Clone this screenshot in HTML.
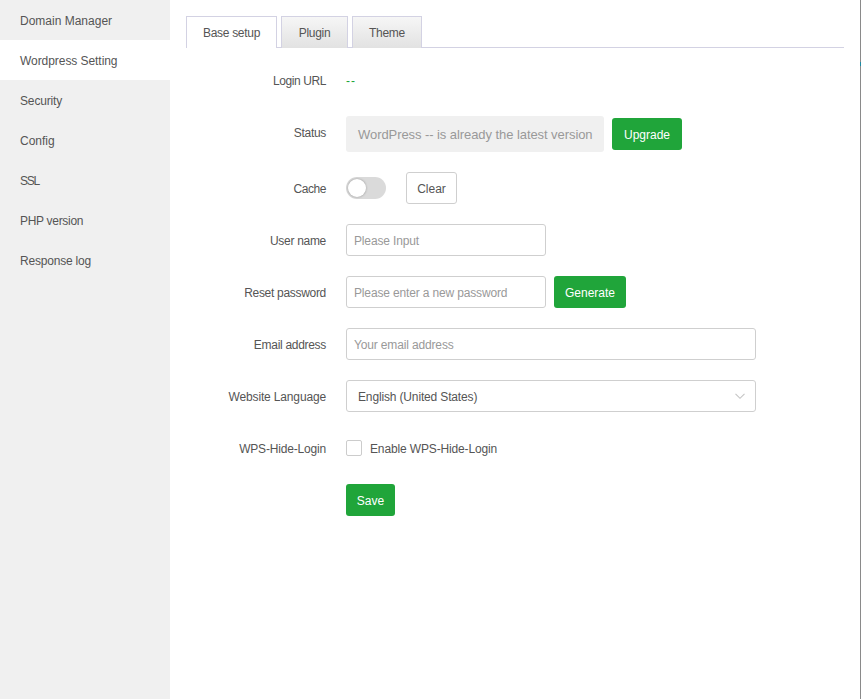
<!DOCTYPE html>
<html><head><meta charset="utf-8">
<style>
*{box-sizing:border-box;margin:0;padding:0}
html,body{width:861px;height:699px;overflow:hidden;background:#fff}
body{font-family:"Liberation Sans",sans-serif;font-size:12px;color:#666;position:relative}
.side{position:absolute;left:0;top:0;width:170px;height:699px;background:#f0f0f0}
.side div{height:40px;line-height:40px;padding-top:1px;padding-left:20px;color:#555;font-size:12px}
.side div.on{background:#fff}
.rb{position:absolute;left:860px;top:0;width:1px;height:699px;background:#8a8a8a}
.tabs{position:absolute;left:186px;top:16px;width:658px;height:32px;border-bottom:1px solid #d3d2e3}
.tab{position:absolute;top:0;height:32px;border:1px solid #d3d2e3;border-bottom:none;text-align:center;line-height:31px;padding-top:1px;color:#555;letter-spacing:-0.3px;background:linear-gradient(#f6f6f6,#e2e2e2)}
.tab.on{background:#fff;height:32px}
.abs{position:absolute}
.lbl{position:absolute;right:535px;color:#555;font-size:12px;white-space:nowrap;letter-spacing:-0.3px}
.btn{position:absolute;background:#20a53a;color:#fff;border-radius:3px;text-align:center;font-size:12px;padding-top:1px}
.inp{position:absolute;border:1px solid #cfcfcf;border-radius:3px;background:#fff;color:#999;padding-left:7px;padding-top:1px;font-size:12px;letter-spacing:-0.15px;white-space:nowrap}
</style></head><body>
<div class="side">
<div>Domain Manager</div>
<div class="on" style="letter-spacing:-0.06px">Wordpress Setting</div>
<div style="letter-spacing:-0.15px">Security</div>
<div>Config</div>
<div style="letter-spacing:-1.3px">SSL</div>
<div style="letter-spacing:-0.3px">PHP version</div>
<div style="letter-spacing:-0.2px">Response log</div>
</div>
<div class="rb"></div><div class="abs" style="left:860px;top:62px;width:1px;height:4px;background:#1d8ba3"></div>

<div class="tabs">
<div class="tab on" style="left:0;width:91px">Base setup</div>
<div class="tab" style="left:95px;width:67px">Plugin</div>
<div class="tab" style="left:166px;width:70px">Theme</div>
</div>

<div class="lbl" style="top:74px;letter-spacing:-0.4px">Login URL</div>
<div class="abs" style="left:346px;top:74px;color:#20a53a;letter-spacing:1px">--</div>

<div class="lbl" style="top:126px">Status</div>
<div class="abs" style="left:346px;top:116px;width:258px;height:36px;background:#f0f0f0;border-radius:3px;color:#999;font-size:13px;line-height:36px;padding-top:1px;padding-left:12px;letter-spacing:-0.07px;white-space:nowrap">WordPress -- is already the latest version</div>
<div class="btn" style="left:612px;top:118px;width:70px;height:32px;line-height:32px">Upgrade</div>

<div class="lbl" style="top:182px;letter-spacing:-0.45px">Cache</div>
<div class="abs" style="left:346px;top:177px;width:40px;height:22px;border-radius:11px;background:#dadada"></div>
<div class="abs" style="left:348px;top:179px;width:18px;height:18px;border-radius:50%;background:#fff;box-shadow:0 0 2px 0.5px rgba(0,0,0,.2)"></div>
<div class="abs" style="left:406px;top:172px;width:51px;height:32px;border:1px solid #cfcfcf;border-radius:3px;line-height:30px;padding-top:1px;text-align:center;color:#555">Clear</div>

<div class="lbl" style="top:234px">User name</div>
<div class="inp" style="left:346px;top:224px;width:200px;height:32px;line-height:30px">Please Input</div>

<div class="lbl" style="top:286px">Reset password</div>
<div class="inp" style="left:346px;top:276px;width:200px;height:32px;line-height:30px">Please enter a new password</div>
<div class="btn" style="left:554px;top:276px;width:72px;height:32px;line-height:32px">Generate</div>

<div class="lbl" style="top:338px">Email address</div>
<div class="inp" style="left:346px;top:328px;width:410px;height:32px;line-height:30px">Your email address</div>

<div class="lbl" style="top:390px;letter-spacing:-0.15px">Website Language</div>
<div class="inp" style="left:346px;top:380px;width:410px;height:32px;line-height:30px;color:#555;padding-left:11px">English (United States)<svg style="position:absolute;left:388px;top:12px" width="11" height="7" viewBox="0 0 11 7"><path d="M0.5 0.8 L5 5.3 L9.5 0.8" fill="none" stroke="#c4c4c4" stroke-width="1.1"/></svg></div>

<div class="lbl" style="top:442px;letter-spacing:-0.18px">WPS-Hide-Login</div>
<div class="abs" style="left:346px;top:440px;width:16px;height:16px;border:1px solid #ccc;border-radius:2px"></div>
<div class="abs" style="left:370px;top:442px;color:#555;letter-spacing:-0.14px">Enable WPS-Hide-Login</div>

<div class="btn" style="left:346px;top:484px;width:49px;height:32px;line-height:32px">Save</div>
</body></html>
